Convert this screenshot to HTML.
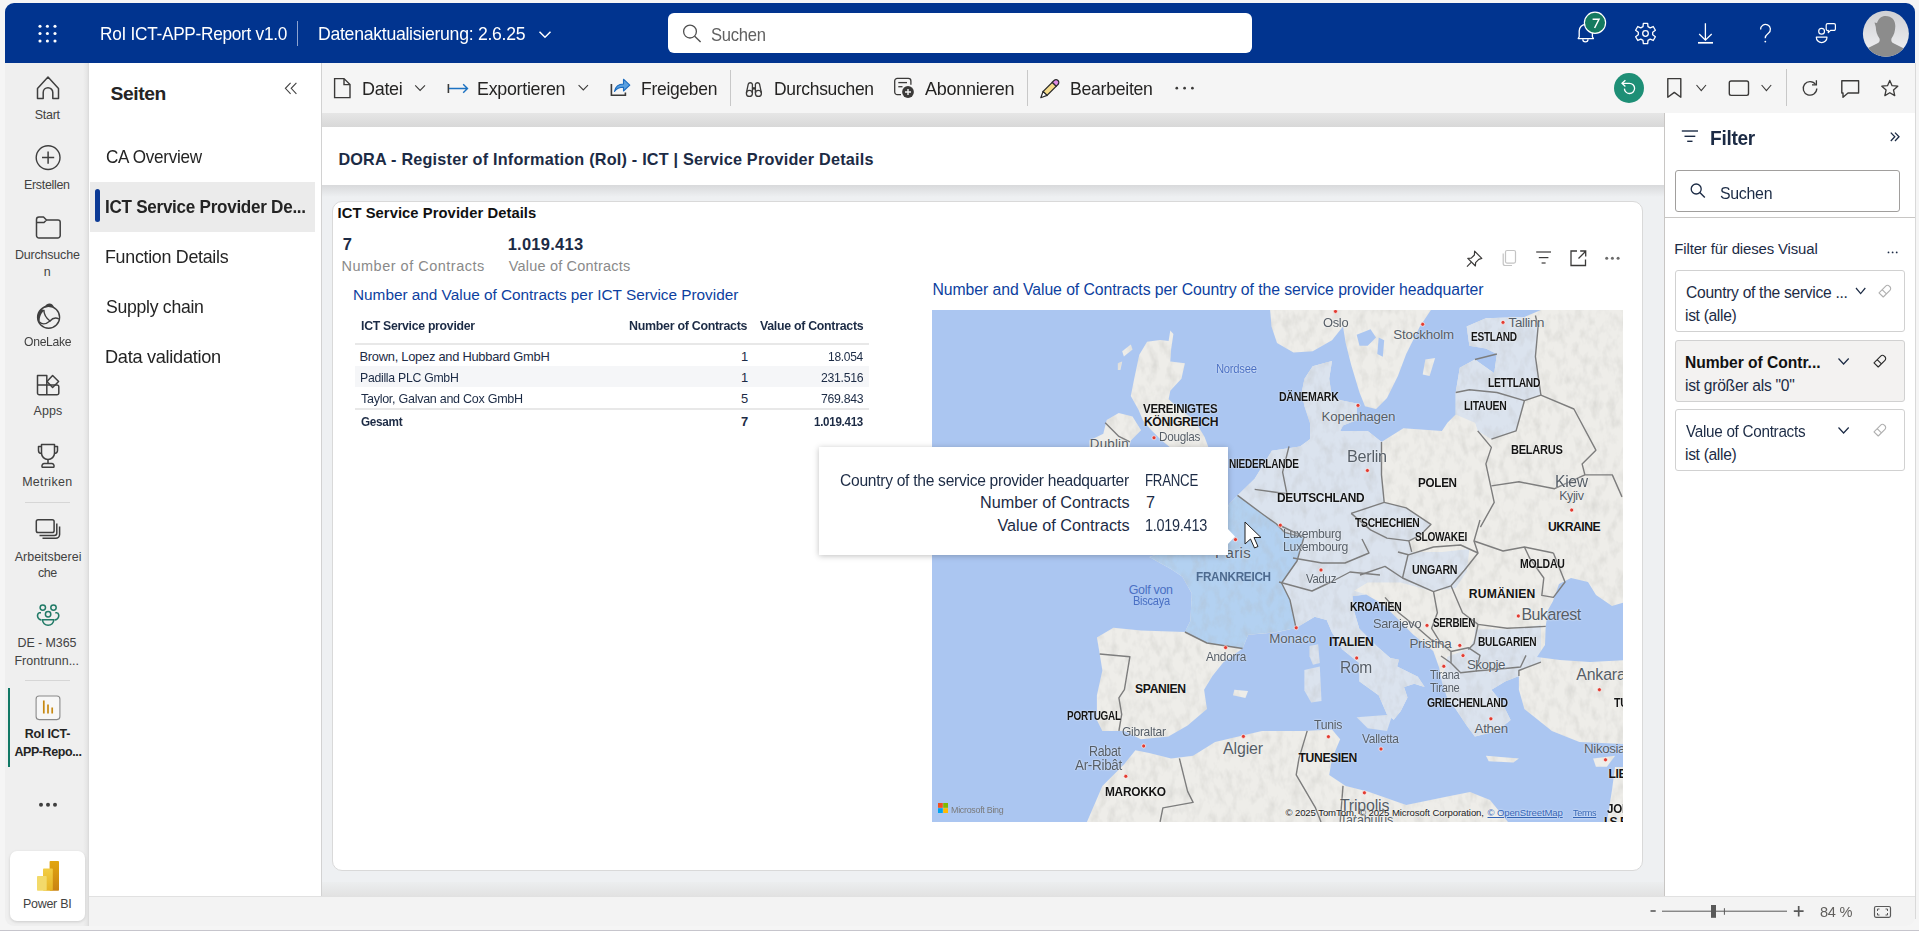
<!DOCTYPE html>
<html><head><meta charset="utf-8"><style>
*{margin:0;padding:0;box-sizing:border-box}
html,body{width:1919px;height:931px;overflow:hidden;background:#f5f5f5;font-family:"Liberation Sans",sans-serif;position:relative}
.a{position:absolute}
.t{position:absolute;white-space:nowrap;line-height:1}
svg{position:absolute;overflow:visible}
#topbar{left:5px;top:3px;width:1910px;height:60px;background:#01348f;border-radius:9px 9px 0 0}
#rail{left:5px;top:63px;width:84px;height:863px;background:linear-gradient(to right,#efefef 0,#efefef 78px,#e6e6e6 82px,#d9d9d9 84px);border-radius:0 0 0 9px}
#pages{left:89px;top:63px;width:232px;height:833px;background:#fff}
#vline{left:321px;top:63px;width:1px;height:833px;background:#d2d2d2}
#toolbar{left:322px;top:63px;width:1593px;height:50px;background:#f5f5f5}
#canvas{left:322px;top:113px;width:1342px;height:783px;background:#eef0f2}
#band1{left:322px;top:113px;width:1342px;height:14px;background:linear-gradient(#e6e6e6,#d8d8d8)}
#hdr{left:322px;top:127px;width:1342px;height:58px;background:#fff}
#band2{left:322px;top:185px;width:1342px;height:12px;background:linear-gradient(#d8d9db,#eef0f2)}
#band3{left:322px;top:882px;width:1342px;height:14px;background:linear-gradient(#eceeef,#e2e2e2)}
#card{left:332px;top:201px;width:1311px;height:670px;background:#fff;border:1px solid #d9d9d9;border-radius:10px}
#filter{left:1664px;top:113px;width:251px;height:783px;background:#fff;border-left:1px solid #c8c6c4}
#bottom{left:89px;top:896px;width:1826px;height:30px;background:#f3f3f3;border-top:1px solid #e1e1e1;border-radius:0 0 9px 0}
#botline{left:0;top:930px;width:1919px;height:1px;background:#c6c5cc}
#fsearch{left:1675px;top:170px;width:225px;height:42px;border:1px solid #a19f9d;border-radius:3px;background:#fff}
#fsep{left:1665px;top:217px;width:250px;height:1px;background:#c8c6c4}
.fcard{position:absolute;left:1675px;width:230px;border:1px solid #d1d1d1;border-radius:3px;background:#fff}
#sel{left:90px;top:182px;width:225px;height:50px;background:#ebebeb}
#selbar{left:95px;top:189px;width:5px;height:33px;background:#0c3a95;border-radius:3px}
#tsearch{left:668px;top:13px;width:584px;height:40px;background:#fff;border-radius:6px}
#tooltip{left:819px;top:447px;width:409px;height:108px;background:#fff;box-shadow:0 1px 6px rgba(0,0,0,.25)}
.sep{position:absolute;background:#d6d6d6}

</style></head><body>
<div class="a" id="topbar"></div>
<div class="a" id="tsearch"></div>
<div class="a" id="rail"></div>
<div class="a" id="pages"></div>
<div class="a" id="vline"></div>
<div class="a" id="toolbar"></div>
<div class="a" id="canvas"></div>
<div class="a" id="band1"></div>
<div class="a" id="hdr"></div>
<div class="a" id="band2"></div>
<div class="a" id="band3"></div>
<div class="a" id="card"></div>
<div class="a" id="filter"></div>
<div class="a" id="fsearch"></div>
<div class="a" id="fsep"></div>
<div class="fcard" style="top:270px;height:62px"></div>
<div class="fcard" style="top:340px;height:62px;background:#f3f2f1"></div>
<div class="fcard" style="top:409px;height:62px"></div>
<div class="a" id="bottom"></div>
<div class="a" id="botline"></div>
<div class="a" id="sel"></div>
<div class="a" id="selbar"></div>
<div class="sep" style="left:25px;top:502px;width:45px;height:1px"></div>
<div class="sep" style="left:25px;top:680px;width:45px;height:1px"></div>
<div class="a" style="left:8px;top:688px;width:2px;height:79px;background:#117865"></div>
<div class="a" style="left:10px;top:851px;width:75px;height:70px;background:#fff;border-radius:7px;box-shadow:0 1px 3px rgba(0,0,0,.15)"></div>
<div class="a" style="left:297px;top:21px;width:1px;height:25px;background:#8da2cf"></div>
<div class="a" style="left:730px;top:70px;width:1px;height:36px;background:#c8c8c8"></div>
<div class="a" style="left:1027px;top:70px;width:1px;height:36px;background:#c8c8c8"></div>
<div class="a" style="left:1786px;top:69px;width:1px;height:37px;background:#c8c8c8"></div>
<div class="a" style="left:355px;top:343px;width:514px;height:2px;background:#e8e8e8"></div>
<div class="a" style="left:355px;top:366px;width:514px;height:21px;background:#f5f6f8"></div>
<div class="a" style="left:355px;top:408px;width:514px;height:2px;background:#e8e8e8"></div>
<div class="a" style="left:1915px;top:63px;width:1px;height:856px;background:#d9d9d9"></div>

<div id="map" class="a" style="left:932px;top:310px;width:691px;height:512px;overflow:hidden;background:#abc6f1">
<svg width="691" height="512" viewBox="932 310 691 512" style="left:0;top:0"><defs><filter id="relief" x="0" y="0" width="1" height="1" filterUnits="objectBoundingBox"><feTurbulence type="fractalNoise" baseFrequency="0.12 0.07" numOctaves="3" seed="7" result="n"/><feColorMatrix in="n" type="matrix" values="0 0 0 0 0.45  0 0 0 0 0.45  0 0 0 0 0.43  0.7 0 0 0 -0.30" result="sh"/><feComposite in="sh" in2="SourceAlpha" operator="in" result="s2"/><feMerge><feMergeNode in="SourceGraphic"/><feMergeNode in="s2"/></feMerge></filter></defs>
<g filter="url(#relief)">
<path d="M1270.1,310.0 L1430.9,310.0 L1419.9,326.5 L1406.2,354.0 L1397.9,376.0 L1387.0,398.0 L1376.0,409.0 L1365.0,406.2 L1359.5,392.5 L1351.2,365.0 L1345.7,343.0 L1343.0,326.5 L1332.0,340.2 L1312.7,351.2 L1293.5,352.6 L1277.0,343.0 L1271.5,326.5 Z" fill="#eeede9" />
<path d="M1425.4,359.5 L1435.1,358.1 L1429.6,376.0 L1422.7,374.6 Z" fill="#eeede9" />
<path d="M1096.9,637.5 L1113.4,627.8 L1140.9,630.6 L1184.9,632.0 L1190.4,621.0 L1191.8,593.5 L1176.6,566.0 L1190.2,581.8 L1170.9,568.9 L1149.4,557.1 L1164.4,551.7 L1181.6,549.6 L1201.0,541.0 L1220.3,530.2 L1228.9,504.4 L1237.5,495.4 L1254.7,478.7 L1271.9,450.7 L1300.0,446.4 L1310.0,439.2 L1310.0,422.7 L1304.5,406.2 L1301.7,392.5 L1304.5,378.7 L1312.7,366.3 L1332.0,360.9 L1329.2,378.7 L1332.0,398.0 L1343.0,400.7 L1356.7,403.5 L1356.7,420.0 L1343.0,425.4 L1340.2,430.9 L1367.7,430.9 L1381.5,441.9 L1403.4,428.2 L1441.9,430.9 L1447.4,422.7 L1455.7,414.5 L1455.7,392.5 L1459.8,367.7 L1474.9,359.5 L1494.2,373.2 L1496.9,354.0 L1485.9,348.5 L1469.4,345.7 L1466.7,326.5 L1485.9,318.2 L1524.4,316.9 L1540.9,310.0 L1634.3,308.6 L1634.3,565.9 L1634.3,744.7 L1579.4,741.9 L1551.9,730.9 L1524.4,708.9 L1518.9,689.7 L1518.9,676.0 L1505.1,681.4 L1491.4,689.7 L1502.4,703.4 L1510.6,719.9 L1496.9,730.9 L1474.9,736.4 L1466.7,725.4 L1455.7,708.9 L1447.4,697.9 L1441.9,681.4 L1439.2,667.7 L1433.2,651.1 L1412.6,633.9 L1398.9,620.1 L1383.4,604.7 L1366.2,594.4 L1352.5,596.1 L1354.2,611.5 L1359.3,628.7 L1376.5,645.9 L1390.3,657.9 L1398.9,659.7 L1397.1,666.5 L1417.8,676.8 L1424.6,687.1 L1414.3,683.7 L1404.0,687.1 L1407.5,697.5 L1400.6,711.2 L1393.7,719.8 L1387.0,714.4 L1378.7,695.2 L1359.5,681.4 L1359.3,663.1 L1342.2,649.3 L1331.9,632.2 L1326.7,620.1 L1314.7,616.7 L1295.8,627.9 L1276.9,632.2 L1248.1,634.7 L1242.6,648.5 L1223.4,662.2 L1212.4,676.0 L1204.1,689.7 L1206.9,708.9 L1187.6,725.4 L1168.4,736.4 L1140.9,739.2 L1124.4,730.9 L1102.4,730.9 L1096.9,719.9 L1096.9,695.2 L1102.4,670.5 L1099.7,654.0 Z" fill="#eeede9" />
<path d="M1085.9,824.4 L1102.4,785.9 L1124.4,763.9 L1135.4,750.2 L1149.2,752.9 L1171.1,758.4 L1193.1,755.7 L1215.1,741.9 L1261.9,730.9 L1289.3,730.9 L1304.5,730.9 L1332.0,729.6 L1340.2,739.2 L1332.0,758.4 L1329.2,774.9 L1345.7,785.9 L1367.7,791.4 L1406.2,805.1 L1445.0,797.0 L1470.0,792.0 L1490.0,800.0 L1508.0,822.0 L1508.0,940.0 Z" fill="#eeede9" />
<path d="M1615.0,767.0 L1635.0,767.0 L1635.0,840.0 L1604.0,840.0 L1608.0,815.0 L1612.0,790.0 Z" fill="#eeede9" />
<path d="M1147.1,341.8 L1160.0,340.1 L1168.6,340.9 L1170.3,330.6 L1173.4,334.1 L1171.1,349.5 L1170.3,361.5 L1184.9,363.3 L1181.4,378.7 L1170.3,390.8 L1168.6,399.3 L1180.6,409.7 L1194.3,420.0 L1204.6,437.1 L1209.8,450.9 L1214.9,473.2 L1221.8,490.4 L1213.2,507.6 L1187.5,509.3 L1161.7,512.7 L1170.3,499.0 L1156.5,481.8 L1166.8,464.6 L1170.3,447.5 L1161.7,440.6 L1151.4,430.3 L1142.8,420.0 L1138.5,409.7 L1130.8,395.9 L1134.2,378.7 L1139.3,354.7 Z" fill="#eeede9" />
<path d="M1106.7,420.0 L1118.7,413.1 L1132.5,416.5 L1141.1,430.3 L1130.8,440.6 L1127.3,456.0 L1110.1,481.8 L1084.4,478.4 L1089.5,456.0 L1089.5,440.6 L1103.3,433.7 Z" fill="#eeede9" />
<path d="M1122.2,351.2 L1130.8,344.4 L1132.5,349.5 L1123.9,356.4 Z" fill="#eeede9" />
<path d="M1117.9,363.3 L1122.2,361.5 L1120.4,370.1 L1117.9,370.1 Z" fill="#eeede9" />
<path d="M1309.5,645.9 L1318.1,644.2 L1319.8,663.1 L1313.0,664.8 L1309.5,656.2 Z" fill="#dbe3ee" />
<path d="M1304.4,670.0 L1319.8,666.5 L1321.5,700.9 L1311.2,702.6 L1304.4,690.6 Z" fill="#dbe3ee" />
<path d="M1356.7,717.2 L1392.4,714.4 L1387.0,730.9 L1367.7,728.2 Z" fill="#dbe3ee" />
<path d="M1485.9,755.7 L1518.9,758.4 L1513.4,762.5 L1488.7,761.2 Z" fill="#eeede9" />
<path d="M1593.1,758.4 L1615.1,755.7 L1606.9,766.7 L1595.9,766.7 Z" fill="#eeede9" />
<path d="M1234.4,689.7 L1248.1,691.1 L1245.4,697.9 L1233.0,695.2 Z" fill="#eeede9" />
<path d="M1176.6,566.0 L1191.8,593.5 L1190.4,621.0 L1184.9,632.0 L1206.9,643.0 L1242.6,648.5 L1248.1,634.7 L1277.0,632.0 L1277.0,632.0 L1296.0,627.9 L1290.0,600.0 L1281.6,583.0 L1297.0,561.0 L1304.0,537.0 L1280.0,525.5 L1300.0,536.7 L1284.7,532.4 L1276.2,523.8 L1261.1,513.0 L1237.5,495.4 L1228.9,504.4 L1220.3,530.2 L1201.0,541.0 L1181.6,549.6 L1164.4,551.7 L1149.4,557.1 L1170.9,568.9 L1190.2,581.8 Z" fill="#b3d1f1" />
<path d="M1237.5,495.4 L1254.7,478.7 L1271.9,450.7 L1300.0,446.4 L1310.0,439.2 L1310.0,422.7 L1304.5,406.2 L1301.7,392.5 L1304.5,378.7 L1312.7,366.3 L1332.0,360.9 L1329.2,378.7 L1332.0,398.0 L1343.0,400.7 L1356.7,403.5 L1356.7,420.0 L1343.0,425.4 L1340.2,430.9 L1367.7,430.9 L1381.5,441.9 L1381.5,474.9 L1384.2,502.4 L1406.2,507.9 L1430.9,524.4 L1419.9,535.4 L1408.9,540.9 L1411.7,551.9 L1441.9,551.9 L1469.4,549.1 L1466.7,571.5 L1455.7,588.0 L1430.9,590.7 L1400.7,582.5 L1367.7,582.5 L1354.0,590.7 L1366.2,594.4 L1352.5,596.1 L1354.2,611.5 L1359.3,628.7 L1376.5,645.9 L1390.3,657.9 L1398.9,659.7 L1397.1,666.5 L1417.8,676.8 L1424.6,687.1 L1414.3,683.7 L1404.0,687.1 L1407.5,697.5 L1400.6,711.2 L1393.7,719.8 L1387.0,714.4 L1378.7,695.2 L1359.5,681.4 L1359.3,663.1 L1342.2,649.3 L1331.9,632.2 L1326.7,620.1 L1314.7,616.7 L1295.8,627.9 L1290.0,600.0 L1281.6,583.0 L1297.0,561.0 L1304.0,537.0 L1280.0,525.5 L1300.0,536.7 L1284.7,532.4 L1276.2,523.8 L1261.1,513.0 Z" fill="#dbe3ee" />
<path d="M1469.4,345.7 L1466.7,326.5 L1485.9,318.2 L1524.4,316.9 L1538.1,326.5 L1535.4,356.7 L1540.9,395.2 L1524.4,400.7 L1516.1,430.9 L1491.4,439.2 L1477.7,430.9 L1474.9,422.7 L1455.7,414.5 L1455.7,392.5 L1459.8,367.7 L1474.9,359.5 L1494.2,373.2 L1496.9,354.0 L1485.9,348.5 Z" fill="#dbe3ee" />
<path d="M1474.9,629.2 L1510.6,629.2 L1540.9,625.1 L1540.9,662.2 L1518.9,670.5 L1518.9,676.0 L1505.1,681.4 L1491.4,689.7 L1502.4,703.4 L1510.6,719.9 L1496.9,730.9 L1474.9,736.4 L1466.7,725.4 L1455.7,708.9 L1447.4,697.9 L1441.9,681.4 L1447.4,656.7 L1469.4,648.5 L1474.9,637.5 Z" fill="#dbe3ee" />
<path d="M1444.7,428.2 L1474.9,422.7 L1477.7,430.9 L1441.9,432.3 Z" fill="#eeede9" />
</g>
<path d="M1356.7,334.7 L1370.5,329.2 L1376.0,337.5 L1367.7,345.7 L1359.5,345.7 Z" fill="#abc6f1" />
<path d="M1378.7,337.5 L1384.2,340.2 L1382.8,356.7 L1377.3,354.0 Z" fill="#abc6f1" />
<path d="M1545.7,626.4 L1548.0,610.0 L1553.0,601.0 L1559.0,584.0 L1571.0,578.0 L1588.0,582.0 L1596.0,595.0 L1612.0,606.0 L1622.0,603.0 L1630.0,600.0 L1630.0,660.0 L1590.0,662.0 L1560.0,660.0 L1537.0,657.0 L1545.0,645.0 Z" fill="#abc6f1" />
<path d="M1381.5,441.9 L1381.5,474.9 L1384.2,502.4 L1406.2,507.9 L1430.9,524.4 L1419.9,535.4 L1408.9,540.9 L1411.7,551.9" fill="none" stroke="#7d7d7d" stroke-width="1.4" stroke-linejoin="round" />
<path d="M1398.0,552.0 L1408.4,554.8 L1433.5,547.0 L1460.6,545.0 L1478.0,553.0 L1474.0,541.0 L1480.0,520.0" fill="none" stroke="#7d7d7d" stroke-width="1.4" stroke-linejoin="round" />
<path d="M1478.0,553.0 L1464.4,570.3 L1451.0,585.8 L1433.5,591.6 L1402.5,578.0 L1385.0,566.4 L1360.0,575.0" fill="none" stroke="#7d7d7d" stroke-width="1.4" stroke-linejoin="round" />
<path d="M1408.0,555.0 L1402.5,578.0" fill="none" stroke="#7d7d7d" stroke-width="1.4" stroke-linejoin="round" />
<path d="M1474.0,541.0 L1503.0,551.0 L1524.4,547.0 L1553.4,553.0" fill="none" stroke="#7d7d7d" stroke-width="1.4" stroke-linejoin="round" />
<path d="M1524.4,547.0 L1530.0,558.7 L1543.8,578.0 L1541.8,595.4 L1553.4,597.4 L1565.0,582.0 L1553.4,553.0" fill="none" stroke="#7d7d7d" stroke-width="1.4" stroke-linejoin="round" />
<path d="M1451.0,585.8 L1462.5,612.8 L1478.0,624.4 L1507.0,628.3 L1545.7,626.4" fill="none" stroke="#7d7d7d" stroke-width="1.4" stroke-linejoin="round" />
<path d="M1478.0,624.4 L1474.0,643.8 L1468.3,649.6" fill="none" stroke="#7d7d7d" stroke-width="1.4" stroke-linejoin="round" />
<path d="M1433.5,591.6 L1437.4,612.8 L1431.6,628.3 L1441.2,643.8 L1451.0,651.5" fill="none" stroke="#7d7d7d" stroke-width="1.4" stroke-linejoin="round" />
<path d="M1385.0,597.4 L1398.7,612.8 L1418.0,628.3 L1431.6,640.0 L1441.2,643.8" fill="none" stroke="#7d7d7d" stroke-width="1.4" stroke-linejoin="round" />
<path d="M1451.0,651.5 L1468.3,647.7 L1480.0,655.4 L1476.0,671.0 L1460.6,672.8 L1451.0,663.0 L1451.0,651.5" fill="none" stroke="#7d7d7d" stroke-width="1.4" stroke-linejoin="round" />
<path d="M1476.0,671.0 L1500.0,669.0 L1520.5,667.0 L1526.0,655.4" fill="none" stroke="#7d7d7d" stroke-width="1.4" stroke-linejoin="round" />
<path d="M1441.0,656.0 L1451.0,663.0" fill="none" stroke="#7d7d7d" stroke-width="1.4" stroke-linejoin="round" />
<path d="M1099.7,654.0 L1129.9,656.7 L1124.4,689.7 L1118.9,697.9 L1121.7,714.4 L1118.9,730.9" fill="none" stroke="#7d7d7d" stroke-width="1.4" stroke-linejoin="round" />
<path d="M1184.9,632.0 L1206.9,643.0 L1242.6,648.5" fill="none" stroke="#7d7d7d" stroke-width="1.4" stroke-linejoin="round" />
<path d="M1179.4,758.4 L1187.6,791.4 L1193.1,802.4 L1162.9,807.9 L1160.1,821.9" fill="none" stroke="#7d7d7d" stroke-width="1.4" stroke-linejoin="round" />
<path d="M1307.2,730.9 L1299.0,758.4 L1296.2,774.9 L1315.5,807.9 L1321.0,821.9" fill="none" stroke="#7d7d7d" stroke-width="1.4" stroke-linejoin="round" />
<path d="M1343.0,785.9 L1340.2,821.9" fill="none" stroke="#7d7d7d" stroke-width="1.4" stroke-linejoin="round" />
<path d="M1477.7,430.9 L1491.4,447.4 L1485.9,463.9 L1494.2,502.4 L1480.4,527.2" fill="none" stroke="#7d7d7d" stroke-width="1.4" stroke-linejoin="round" />
<path d="M1491.4,439.2 L1516.1,430.9 L1524.4,400.7 L1540.9,395.2" fill="none" stroke="#7d7d7d" stroke-width="1.4" stroke-linejoin="round" />
<path d="M1540.9,395.2 L1573.9,409.0 L1595.9,450.2 L1582.1,463.9 L1584.9,474.9" fill="none" stroke="#7d7d7d" stroke-width="1.4" stroke-linejoin="round" />
<path d="M1491.4,485.9 L1518.9,481.8 L1554.6,488.7 L1584.9,474.9 L1612.3,474.9 L1622.0,496.9" fill="none" stroke="#7d7d7d" stroke-width="1.4" stroke-linejoin="round" />
<path d="M1535.4,315.5 L1538.1,326.5 L1535.4,356.7 L1540.9,395.2" fill="none" stroke="#7d7d7d" stroke-width="1.4" stroke-linejoin="round" />
<path d="M1455.7,392.5 L1469.4,389.7 L1496.9,392.5 L1524.4,400.7" fill="none" stroke="#7d7d7d" stroke-width="1.4" stroke-linejoin="round" />
<path d="M1474.9,359.5 L1496.9,354.0" fill="none" stroke="#7d7d7d" stroke-width="1.4" stroke-linejoin="round" />
<path d="M1351.2,513.4 L1384.2,502.4" fill="none" stroke="#7d7d7d" stroke-width="1.4" stroke-linejoin="round" />
<path d="M1351.2,513.4 L1370.5,529.9 L1387.0,538.1 L1408.9,540.9" fill="none" stroke="#7d7d7d" stroke-width="1.4" stroke-linejoin="round" />
<path d="M1540.9,662.2 L1518.9,670.5 L1518.9,676.0" fill="none" stroke="#7d7d7d" stroke-width="1.4" stroke-linejoin="round" />
<path d="M1279.0,582.0 L1312.0,591.0 L1331.0,582.0 L1350.0,572.0 L1380.0,575.0" fill="none" stroke="#7d7d7d" stroke-width="1.4" stroke-linejoin="round" />
<path d="M1293.0,558.0 L1322.0,563.0 L1345.0,563.0 L1369.0,553.0 L1362.0,539.0" fill="none" stroke="#7d7d7d" stroke-width="1.4" stroke-linejoin="round" />
<path d="M1296.0,627.9 L1290.0,600.0 L1281.6,583.0 L1297.0,561.0 L1304.0,537.0 L1280.0,525.5" fill="none" stroke="#7d7d7d" stroke-width="1.4" stroke-linejoin="round" />
<path d="M1300.0,536.7 L1284.7,532.4 L1276.2,523.8 L1261.1,513.0 L1237.5,495.4" fill="none" stroke="#7d7d7d" stroke-width="1.4" stroke-linejoin="round" />
<path d="M1254.7,489.4 L1286.9,493.7 L1282.6,472.2 L1289.0,446.4" fill="none" stroke="#7d7d7d" stroke-width="1.4" stroke-linejoin="round" />
<path d="M1105.2,422.7 L1118.9,436.4 L1129.9,441.9" fill="none" stroke="#7d7d7d" stroke-width="1.4" stroke-linejoin="round" />
<circle cx="1335.5" cy="311.4" r="2" fill="#e23b30" stroke="#fff" stroke-width="0.6"/>
<circle cx="1422.7" cy="324.3" r="2" fill="#e23b30" stroke="#fff" stroke-width="0.6"/>
<circle cx="1503" cy="322.4" r="2" fill="#e23b30" stroke="#fff" stroke-width="0.6"/>
<circle cx="1358" cy="405.4" r="2" fill="#e23b30" stroke="#fff" stroke-width="0.6"/>
<circle cx="1367.4" cy="470.5" r="2" fill="#e23b30" stroke="#fff" stroke-width="0.6"/>
<circle cx="1571.7" cy="510.1" r="2" fill="#e23b30" stroke="#fff" stroke-width="0.6"/>
<circle cx="1280.3" cy="525.2" r="2" fill="#e23b30" stroke="#fff" stroke-width="0.6"/>
<circle cx="1154" cy="437.8" r="2" fill="#e23b30" stroke="#fff" stroke-width="0.6"/>
<circle cx="1225.6" cy="647.6" r="2" fill="#e23b30" stroke="#fff" stroke-width="0.6"/>
<circle cx="1143.7" cy="746" r="2" fill="#e23b30" stroke="#fff" stroke-width="0.6"/>
<circle cx="1125.8" cy="776.3" r="2" fill="#e23b30" stroke="#fff" stroke-width="0.6"/>
<circle cx="1243.4" cy="736.4" r="2" fill="#e23b30" stroke="#fff" stroke-width="0.6"/>
<circle cx="1321" cy="570" r="2" fill="#e23b30" stroke="#fff" stroke-width="0.6"/>
<circle cx="1518.3" cy="616" r="2" fill="#e23b30" stroke="#fff" stroke-width="0.6"/>
<circle cx="1427" cy="625.4" r="2" fill="#e23b30" stroke="#fff" stroke-width="0.6"/>
<circle cx="1296.2" cy="627.8" r="2" fill="#e23b30" stroke="#fff" stroke-width="0.6"/>
<circle cx="1459.8" cy="645.4" r="2" fill="#e23b30" stroke="#fff" stroke-width="0.6"/>
<circle cx="1463" cy="655.6" r="2" fill="#e23b30" stroke="#fff" stroke-width="0.6"/>
<circle cx="1356.7" cy="658" r="2" fill="#e23b30" stroke="#fff" stroke-width="0.6"/>
<circle cx="1599.4" cy="689.7" r="2" fill="#e23b30" stroke="#fff" stroke-width="0.6"/>
<circle cx="1443.8" cy="666.3" r="2" fill="#e23b30" stroke="#fff" stroke-width="0.6"/>
<circle cx="1490.9" cy="718.8" r="2" fill="#e23b30" stroke="#fff" stroke-width="0.6"/>
<circle cx="1328.4" cy="736.7" r="2" fill="#e23b30" stroke="#fff" stroke-width="0.6"/>
<circle cx="1381" cy="749" r="2" fill="#e23b30" stroke="#fff" stroke-width="0.6"/>
<circle cx="1605.5" cy="759.8" r="2" fill="#e23b30" stroke="#fff" stroke-width="0.6"/>
<circle cx="1364.4" cy="792.8" r="2" fill="#e23b30" stroke="#fff" stroke-width="0.6"/>
<circle cx="1235.5" cy="539.6" r="2" fill="#e23b30" stroke="#fff" stroke-width="0.6"/>
<rect x="938" y="803" width="4.8" height="4.8" fill="#f25022"/><rect x="943.2" y="803" width="4.8" height="4.8" fill="#7fba00"/><rect x="938" y="808.2" width="4.8" height="4.8" fill="#00a4ef"/><rect x="943.2" y="808.2" width="4.8" height="4.8" fill="#ffb900"/></svg>
<div class="a" style="left:-932px;top:-310px;width:1919px;height:931px"><div class="t" style="left:1215.00px;top:544.69px;font-size:15.07px;color:#555d66;letter-spacing:0.354px;;text-shadow:0 0 2px rgba(255,255,255,.9)">Paris</div>
<div class="t" style="left:1322.60px;top:316.17px;font-size:13.33px;color:#555d66;letter-spacing:-0.300px;transform:scaleX(0.9658);transform-origin:0 0;;text-shadow:0 0 2px rgba(255,255,255,.9)">Oslo</div>
<div class="t" style="left:1393.30px;top:327.97px;font-size:13.33px;color:#555d66;letter-spacing:-0.177px;;text-shadow:0 0 2px rgba(255,255,255,.9)">Stockholm</div>
<div class="t" style="left:1508.60px;top:315.97px;font-size:13.33px;color:#555d66;letter-spacing:-0.329px;;text-shadow:0 0 2px rgba(255,255,255,.9)">Tallinn</div>
<div class="t" style="left:1471.00px;top:330.66px;font-size:12.17px;color:#141414;letter-spacing:-0.300px;font-weight:bold;transform:scaleX(0.8294);transform-origin:0 0;;text-shadow:0 0 2px rgba(255,255,255,.9)">ESTLAND</div>
<div class="t" style="left:1488.20px;top:376.86px;font-size:12.17px;color:#141414;letter-spacing:-0.300px;font-weight:bold;transform:scaleX(0.8447);transform-origin:0 0;;text-shadow:0 0 2px rgba(255,255,255,.9)">LETTLAND</div>
<div class="t" style="left:1464.20px;top:399.86px;font-size:12.17px;color:#141414;letter-spacing:-0.300px;font-weight:bold;transform:scaleX(0.8558);transform-origin:0 0;;text-shadow:0 0 2px rgba(255,255,255,.9)">LITAUEN</div>
<div class="t" style="left:1278.60px;top:391.46px;font-size:12.17px;color:#141414;letter-spacing:-0.300px;font-weight:bold;transform:scaleX(0.8692);transform-origin:0 0;;text-shadow:0 0 2px rgba(255,255,255,.9)">DÄNEMARK</div>
<div class="t" style="left:1321.60px;top:410.17px;font-size:13.33px;color:#555d66;letter-spacing:-0.199px;;text-shadow:0 0 2px rgba(255,255,255,.9)">Kopenhagen</div>
<div class="t" style="left:1346.85px;top:448.46px;font-size:17.1px;color:#555d66;letter-spacing:-0.300px;transform:scaleX(0.9485);transform-origin:0 0;;text-shadow:0 0 2px rgba(255,255,255,.9)">Berlin</div>
<div class="t" style="left:1417.90px;top:477.36px;font-size:12.17px;color:#141414;letter-spacing:-0.300px;font-weight:bold;transform:scaleX(0.9600);transform-origin:0 0;;text-shadow:0 0 2px rgba(255,255,255,.9)">POLEN</div>
<div class="t" style="left:1510.80px;top:444.26px;font-size:12.17px;color:#141414;letter-spacing:-0.300px;font-weight:bold;transform:scaleX(0.9129);transform-origin:0 0;;text-shadow:0 0 2px rgba(255,255,255,.9)">BELARUS</div>
<div class="t" style="left:1555.22px;top:474.45px;font-size:15.94px;color:#555d66;letter-spacing:-0.300px;transform:scaleX(0.9839);transform-origin:0 0;;text-shadow:0 0 2px rgba(255,255,255,.9)">Kiew</div>
<div class="t" style="left:1559.20px;top:490.41px;font-size:12.46px;color:#555d66;letter-spacing:-0.392px;;text-shadow:0 0 2px rgba(255,255,255,.9)">Kyjiv</div>
<div class="t" style="left:1548.00px;top:521.16px;font-size:12.17px;color:#141414;letter-spacing:-0.445px;font-weight:bold;;text-shadow:0 0 2px rgba(255,255,255,.9)">UKRAINE</div>
<div class="t" style="left:1277.20px;top:491.96px;font-size:12.17px;color:#141414;letter-spacing:-0.300px;font-weight:bold;transform:scaleX(0.9784);transform-origin:0 0;;text-shadow:0 0 2px rgba(255,255,255,.9)">DEUTSCHLAND</div>
<div class="t" style="left:1354.70px;top:517.06px;font-size:12.17px;color:#141414;letter-spacing:-0.300px;font-weight:bold;transform:scaleX(0.8485);transform-origin:0 0;;text-shadow:0 0 2px rgba(255,255,255,.9)">TSCHECHIEN</div>
<div class="t" style="left:1414.60px;top:531.36px;font-size:12.17px;color:#141414;letter-spacing:-0.300px;font-weight:bold;transform:scaleX(0.8323);transform-origin:0 0;;text-shadow:0 0 2px rgba(255,255,255,.9)">SLOWAKEI</div>
<div class="t" style="left:1283.05px;top:528.36px;font-size:12.75px;color:#555d66;letter-spacing:-0.300px;transform:scaleX(0.9520);transform-origin:0 0;;text-shadow:0 0 2px rgba(255,255,255,.9)">Luxemburg</div>
<div class="t" style="left:1283.04px;top:540.96px;font-size:12.75px;color:#555d66;letter-spacing:-0.300px;transform:scaleX(0.9585);transform-origin:0 0;;text-shadow:0 0 2px rgba(255,255,255,.9)">Luxembourg</div>
<div class="t" style="left:1520.40px;top:558.46px;font-size:12.17px;color:#141414;letter-spacing:-0.300px;font-weight:bold;transform:scaleX(0.8643);transform-origin:0 0;;text-shadow:0 0 2px rgba(255,255,255,.9)">MOLDAU</div>
<div class="t" style="left:1215.80px;top:363.21px;font-size:12.46px;color:#4a70c4;letter-spacing:-0.300px;transform:scaleX(0.9043);transform-origin:0 0;;text-shadow:0 0 2px rgba(255,255,255,.9)">Nordsee</div>
<div class="t" style="left:1143.20px;top:402.96px;font-size:12.17px;color:#141414;letter-spacing:-0.300px;font-weight:bold;transform:scaleX(0.9475);transform-origin:0 0;;text-shadow:0 0 2px rgba(255,255,255,.9)">VEREINIGTES</div>
<div class="t" style="left:1143.90px;top:416.46px;font-size:12.17px;color:#141414;letter-spacing:-0.343px;font-weight:bold;;text-shadow:0 0 2px rgba(255,255,255,.9)">KÖNIGREICH</div>
<div class="t" style="left:1158.92px;top:429.67px;font-size:13.33px;color:#555d66;letter-spacing:-0.300px;transform:scaleX(0.8786);transform-origin:0 0;;text-shadow:0 0 2px rgba(255,255,255,.9)">Douglas</div>
<div class="t" style="left:1089.80px;top:436.87px;font-size:13.33px;color:#555d66;letter-spacing:0.226px;;text-shadow:0 0 2px rgba(255,255,255,.9)">Dublin</div>
<div class="t" style="left:1228.90px;top:457.66px;font-size:12.17px;color:#141414;letter-spacing:-0.300px;font-weight:bold;transform:scaleX(0.8242);transform-origin:0 0;;text-shadow:0 0 2px rgba(255,255,255,.9)">NIEDERLANDE</div>
<div class="t" style="left:1196.10px;top:571.46px;font-size:12.17px;color:#4d6a8f;letter-spacing:-0.300px;font-weight:bold;transform:scaleX(0.9664);transform-origin:0 0">FRANKREICH</div>
<div class="t" style="left:1128.70px;top:583.71px;font-size:12.46px;color:#4a70c4;letter-spacing:-0.293px">Golf von</div>
<div class="t" style="left:1133.31px;top:594.91px;font-size:12.46px;color:#4a70c4;letter-spacing:-0.300px;transform:scaleX(0.8856);transform-origin:0 0">Biscaya</div>
<div class="t" style="left:1205.70px;top:650.27px;font-size:13.33px;color:#555d66;letter-spacing:-0.300px;transform:scaleX(0.8830);transform-origin:0 0;;text-shadow:0 0 2px rgba(255,255,255,.9)">Andorra</div>
<div class="t" style="left:1135.10px;top:682.86px;font-size:12.17px;color:#141414;letter-spacing:-0.376px;font-weight:bold;;text-shadow:0 0 2px rgba(255,255,255,.9)">SPANIEN</div>
<div class="t" style="left:1066.90px;top:709.86px;font-size:12.17px;color:#141414;letter-spacing:-0.300px;font-weight:bold;transform:scaleX(0.8188);transform-origin:0 0;;text-shadow:0 0 2px rgba(255,255,255,.9)">PORTUGAL</div>
<div class="t" style="left:1122.40px;top:725.47px;font-size:13.33px;color:#555d66;letter-spacing:-0.300px;transform:scaleX(0.9012);transform-origin:0 0;;text-shadow:0 0 2px rgba(255,255,255,.9)">Gibraltar</div>
<div class="t" style="left:1089.31px;top:744.58px;font-size:13.91px;color:#555d66;letter-spacing:-0.300px;transform:scaleX(0.8931);transform-origin:0 0;;text-shadow:0 0 2px rgba(255,255,255,.9)">Rabat</div>
<div class="t" style="left:1074.60px;top:758.98px;font-size:13.91px;color:#555d66;letter-spacing:-0.300px;transform:scaleX(0.9666);transform-origin:0 0;;text-shadow:0 0 2px rgba(255,255,255,.9)">Ar-Ribât</div>
<div class="t" style="left:1104.80px;top:785.96px;font-size:12.17px;color:#141414;letter-spacing:-0.300px;font-weight:bold;transform:scaleX(0.9790);transform-origin:0 0;;text-shadow:0 0 2px rgba(255,255,255,.9)">MAROKKO</div>
<div class="t" style="left:1223.00px;top:741.25px;font-size:15.94px;color:#555d66;letter-spacing:-0.128px;;text-shadow:0 0 2px rgba(255,255,255,.9)">Algier</div>
<div class="t" style="left:1411.90px;top:564.46px;font-size:12.17px;color:#141414;letter-spacing:-0.300px;font-weight:bold;transform:scaleX(0.8792);transform-origin:0 0;;text-shadow:0 0 2px rgba(255,255,255,.9)">UNGARN</div>
<div class="t" style="left:1305.50px;top:571.67px;font-size:13.33px;color:#555d66;letter-spacing:-0.300px;transform:scaleX(0.8529);transform-origin:0 0;;text-shadow:0 0 2px rgba(255,255,255,.9)">Vaduz</div>
<div class="t" style="left:1468.80px;top:588.06px;font-size:12.17px;color:#141414;letter-spacing:0.153px;font-weight:bold;;text-shadow:0 0 2px rgba(255,255,255,.9)">RUMÄNIEN</div>
<div class="t" style="left:1521.40px;top:606.85px;font-size:15.94px;color:#555d66;letter-spacing:-0.438px;;text-shadow:0 0 2px rgba(255,255,255,.9)">Bukarest</div>
<div class="t" style="left:1350.00px;top:600.96px;font-size:12.17px;color:#141414;letter-spacing:-0.300px;font-weight:bold;transform:scaleX(0.8543);transform-origin:0 0;;text-shadow:0 0 2px rgba(255,255,255,.9)">KROATIEN</div>
<div class="t" style="left:1372.90px;top:616.67px;font-size:13.33px;color:#555d66;letter-spacing:-0.300px;transform:scaleX(0.9623);transform-origin:0 0;;text-shadow:0 0 2px rgba(255,255,255,.9)">Sarajevo</div>
<div class="t" style="left:1433.10px;top:617.46px;font-size:12.17px;color:#141414;letter-spacing:-0.300px;font-weight:bold;transform:scaleX(0.8084);transform-origin:0 0;;text-shadow:0 0 2px rgba(255,255,255,.9)">SERBIEN</div>
<div class="t" style="left:1269.20px;top:631.87px;font-size:13.33px;color:#555d66;letter-spacing:-0.081px;;text-shadow:0 0 2px rgba(255,255,255,.9)">Monaco</div>
<div class="t" style="left:1328.90px;top:636.46px;font-size:12.17px;color:#141414;letter-spacing:-0.248px;font-weight:bold;;text-shadow:0 0 2px rgba(255,255,255,.9)">ITALIEN</div>
<div class="t" style="left:1409.50px;top:637.47px;font-size:13.33px;color:#555d66;letter-spacing:-0.333px;;text-shadow:0 0 2px rgba(255,255,255,.9)">Pristina</div>
<div class="t" style="left:1477.90px;top:636.16px;font-size:12.17px;color:#141414;letter-spacing:-0.300px;font-weight:bold;transform:scaleX(0.8381);transform-origin:0 0;;text-shadow:0 0 2px rgba(255,255,255,.9)">BULGARIEN</div>
<div class="t" style="left:1466.90px;top:657.97px;font-size:13.33px;color:#555d66;letter-spacing:-0.448px;;text-shadow:0 0 2px rgba(255,255,255,.9)">Skopje</div>
<div class="t" style="left:1340.22px;top:660.25px;font-size:15.94px;color:#555d66;letter-spacing:-0.300px;transform:scaleX(0.9757);transform-origin:0 0;;text-shadow:0 0 2px rgba(255,255,255,.9)">Rom</div>
<div class="t" style="left:1576.20px;top:667.45px;font-size:15.94px;color:#555d66;letter-spacing:-0.167px;;text-shadow:0 0 2px rgba(255,255,255,.9)">Ankara</div>
<div class="t" style="left:1429.80px;top:669.21px;font-size:12.46px;color:#555d66;letter-spacing:-0.300px;transform:scaleX(0.8920);transform-origin:0 0;;text-shadow:0 0 2px rgba(255,255,255,.9)">Tirana</div>
<div class="t" style="left:1429.80px;top:682.11px;font-size:12.46px;color:#555d66;letter-spacing:-0.300px;transform:scaleX(0.8920);transform-origin:0 0;;text-shadow:0 0 2px rgba(255,255,255,.9)">Tirane</div>
<div class="t" style="left:1426.50px;top:697.46px;font-size:12.17px;color:#141414;letter-spacing:-0.300px;font-weight:bold;transform:scaleX(0.8561);transform-origin:0 0;;text-shadow:0 0 2px rgba(255,255,255,.9)">GRIECHENLAND</div>
<div class="t" style="left:1613.90px;top:697.16px;font-size:12.17px;color:#141414;letter-spacing:-0.300px;font-weight:bold;transform:scaleX(0.8744);transform-origin:0 0;;text-shadow:0 0 2px rgba(255,255,255,.9)">TU</div>
<div class="t" style="left:1474.60px;top:722.47px;font-size:13.33px;color:#555d66;letter-spacing:-0.329px;;text-shadow:0 0 2px rgba(255,255,255,.9)">Athen</div>
<div class="t" style="left:1314.20px;top:718.17px;font-size:13.33px;color:#555d66;letter-spacing:-0.300px;transform:scaleX(0.9157);transform-origin:0 0;;text-shadow:0 0 2px rgba(255,255,255,.9)">Tunis</div>
<div class="t" style="left:1362.40px;top:732.47px;font-size:13.33px;color:#555d66;letter-spacing:-0.300px;transform:scaleX(0.8938);transform-origin:0 0;;text-shadow:0 0 2px rgba(255,255,255,.9)">Valletta</div>
<div class="t" style="left:1298.60px;top:752.16px;font-size:12.17px;color:#141414;letter-spacing:-0.398px;font-weight:bold;;text-shadow:0 0 2px rgba(255,255,255,.9)">TUNESIEN</div>
<div class="t" style="left:1584.10px;top:741.87px;font-size:13.33px;color:#555d66;letter-spacing:-0.398px;;text-shadow:0 0 2px rgba(255,255,255,.9)">Nikosia</div>
<div class="t" style="left:1608.40px;top:768.06px;font-size:12.17px;color:#141414;letter-spacing:-0.327px;font-weight:bold;;text-shadow:0 0 2px rgba(255,255,255,.9)">LIB.</div>
<div class="t" style="left:1339.90px;top:797.85px;font-size:15.94px;color:#555d66;letter-spacing:-0.172px;;text-shadow:0 0 2px rgba(255,255,255,.9)">Tripolis</div>
<div class="t" style="left:1339.90px;top:814.41px;font-size:12.46px;color:#555d66;letter-spacing:-0.084px;;text-shadow:0 0 2px rgba(255,255,255,.9)">Tarabulus</div>
<div class="t" style="left:1606.50px;top:803.46px;font-size:12.17px;color:#141414;letter-spacing:-0.300px;font-weight:bold;transform:scaleX(0.9547);transform-origin:0 0;;text-shadow:0 0 2px rgba(255,255,255,.9)">JOR</div>
<div class="t" style="left:1604.00px;top:815.66px;font-size:12.17px;color:#141414;letter-spacing:2.245px;font-weight:bold;;text-shadow:0 0 2px rgba(255,255,255,.9)">ISRA</div>
<div class="t" style="left:950.90px;top:804.67px;font-size:9.57px;color:#7a7a7a;letter-spacing:-0.300px;transform:scaleX(0.9297);transform-origin:0 0">Microsoft Bing</div>
<div class="t" style="left:1285.40px;top:807.87px;font-size:9.57px;color:#222;letter-spacing:-0.093px;;text-shadow:0 0 2px rgba(255,255,255,.9)">© 2025 TomTom, © 2025 Microsoft Corporation,</div>
<div class="t" style="left:1487.50px;top:807.87px;font-size:9.57px;color:#3465b5;letter-spacing:-0.135px;;text-shadow:0 0 2px rgba(255,255,255,.9);text-decoration:underline">© OpenStreetMap</div>
<div class="t" style="left:1572.50px;top:807.87px;font-size:9.57px;color:#3465b5;letter-spacing:-0.300px;transform:scaleX(0.9462);transform-origin:0 0;;text-shadow:0 0 2px rgba(255,255,255,.9);text-decoration:underline">Terms</div></div>
</div>
<svg class="a" style="left:0;top:0" width="1919" height="931"><circle cx="40" cy="26.2" r="1.55" fill="#fff"/>
<circle cx="40" cy="33.5" r="1.55" fill="#fff"/>
<circle cx="40" cy="41" r="1.55" fill="#fff"/>
<circle cx="47.4" cy="26.2" r="1.55" fill="#fff"/>
<circle cx="47.4" cy="33.5" r="1.55" fill="#fff"/>
<circle cx="47.4" cy="41" r="1.55" fill="#fff"/>
<circle cx="55" cy="26.2" r="1.55" fill="#fff"/>
<circle cx="55" cy="33.5" r="1.55" fill="#fff"/>
<circle cx="55" cy="41" r="1.55" fill="#fff"/>
<polyline points="539.5,31.8 545,37.2 550.5,31.8" fill="none" stroke="#fff" stroke-width="1.5"/>
<circle cx="690" cy="31.6" r="6.4" fill="none" stroke="#505050" stroke-width="1.3"/><line x1="694.7" y1="36.3" x2="700.6" y2="42" stroke="#505050" stroke-width="1.4"/>
<path d="M1578.2,38.6 L1579.2,36.8 V31 A6.6,6.6 0 0 1 1592.4,31 V36.8 L1593.4,38.6 Z" fill="none" stroke="#fff" stroke-width="1.3" stroke-linejoin="round"/>
<path d="M1582.8,39.2 A2.6,2.6 0 0 0 1588,39.2" fill="none" stroke="#fff" stroke-width="1.3"/>
<circle cx="1595" cy="22.8" r="10.6" fill="#147a5f" stroke="#fff" stroke-width="1.2"/>
<path d="M1592.6,19.3 H1599 L1594.6,28" fill="none" stroke="#fff" stroke-width="1.5"/>
<path d="M1643.34,23.33 L1647.66,23.33 L1648.00,26.64 L1650.19,27.91 L1653.23,26.54 L1655.39,30.29 L1652.69,32.23 L1652.69,34.77 L1655.39,36.71 L1653.23,40.46 L1650.19,39.09 L1648.00,40.36 L1647.66,43.67 L1643.34,43.67 L1643.00,40.36 L1640.81,39.09 L1637.77,40.46 L1635.61,36.71 L1638.31,34.77 L1638.31,32.23 L1635.61,30.29 L1637.77,26.54 L1640.81,27.91 L1643.00,26.64 Z" fill="none" stroke="#fff" stroke-width="1.3" stroke-linejoin="round"/><circle cx="1645.5" cy="33.5" r="2.8" fill="none" stroke="#fff" stroke-width="1.3"/>
<path d="M1705.4,23.3 V40 M1699.2,34 L1705.4,40.2 L1711.7,34" fill="none" stroke="#fff" stroke-width="1.3"/><line x1="1698" y1="42.8" x2="1713" y2="42.8" stroke="#fff" stroke-width="1.7"/>
<path d="M1760.6,29.5 A4.9,4.9 0 1 1 1768.4,33.2 C1766.3,34.8 1765.2,35.5 1765.2,38.2" fill="none" stroke="#fff" stroke-width="1.3"/><circle cx="1765.3" cy="41.6" r="0.9" fill="#fff"/>
<circle cx="1821.6" cy="31.3" r="2.9" fill="none" stroke="#fff" stroke-width="1.2"/>
<path d="M1816.3,37.2 H1827 A5.35,5.4 0 0 1 1816.3,37.2 Z" fill="none" stroke="#fff" stroke-width="1.2" stroke-linejoin="round"/>
<path d="M1827.6,23.6 H1834 A1.4,1.4 0 0 1 1835.4,25 V29 A1.4,1.4 0 0 1 1834,30.4 H1830.5 L1828.3,32.6 V30.4 A1.6,1.6 0 0 1 1826.2,28.8 V25 A1.4,1.4 0 0 1 1827.6,23.6 Z" fill="none" stroke="#fff" stroke-width="1.2" stroke-linejoin="round"/>
<defs><linearGradient id="avg" x1="0" y1="0" x2="0" y2="1"><stop offset="0" stop-color="#cfd0d4"/><stop offset="1" stop-color="#f2f2f4"/></linearGradient><clipPath id="avc"><circle cx="1885.9" cy="33.8" r="23"/></clipPath></defs>
<circle cx="1885.9" cy="33.8" r="23" fill="url(#avg)"/>
<g clip-path="url(#avc)"><path d="M1885.5,16 C1892,16 1895.5,20.5 1895.3,26.5 C1895.2,31 1894,35 1891.5,38.5 C1891,40.5 1891.5,42 1893,43 L1903,48 C1906,50 1908,54 1908,60 L1863,60 C1863,54 1865,50 1868,48 L1878,43 C1879.5,42 1880,40.5 1879.5,38.5 C1877,35 1875.8,31 1875.8,27 L1874.5,22.5 L1877,23 C1878.5,18.5 1881.5,16 1885.5,16 Z" fill="#8c8c8c"/></g>
<path d="M334.6,78.6 H344 L350,84.6 V97.6 H334.6 Z M344,78.6 V84.6 H350" fill="none" stroke="#3b3a39" stroke-width="1.4" stroke-linejoin="miter"/>
<polyline points="415.2,85.4 420.1,90.4 425,85.4" fill="none" stroke="#3b3a39" stroke-width="1.1"/>
<polyline points="578.6,85.2 583.3,89.9 588,85.2" fill="none" stroke="#3b3a39" stroke-width="1.1"/>
<line x1="448.4" y1="84" x2="448.4" y2="93" stroke="#3b3a39" stroke-width="1.6"/><path d="M449,88.5 H467.3 M463.2,84.2 L467.5,88.5 L463.2,92.8" fill="none" stroke="#1c72c2" stroke-width="1.4"/>
<path d="M611.4,84 V95.3 H625.4 V92.6" fill="none" stroke="#3b3a39" stroke-width="1.6"/>
<path d="M614.5,91.5 C615.5,86 618.5,84 623.5,84 V79.2 L629.8,85.2 L623.5,91 V87.3 C619.5,87.3 616.5,88.5 614.5,91.5 Z" fill="#5aa0e0" stroke="#1b6cc0" stroke-width="1.1" stroke-linejoin="round"/>
<g fill="none" stroke="#3b3a39" stroke-width="1.3"><circle cx="749.4" cy="93.4" r="3"/><circle cx="758.4" cy="93.4" r="3"/><path d="M746.4,92.8 L748.2,84.3 A2.2,2.2 0 0 1 752.4,84.3 V93"/><path d="M761.4,92.8 L759.6,84.3 A2.2,2.2 0 0 0 755.4,84.3 V93"/></g><rect x="752.4" y="87.2" width="3" height="2.4" fill="#3b3a39"/>
<path d="M901,94.6 H897.3 A2.6,2.6 0 0 1 894.7,92 V81 A2.6,2.6 0 0 1 897.3,78.4 H908.3 A2.6,2.6 0 0 1 910.9,81 V84.8" fill="none" stroke="#3b3a39" stroke-width="1.3"/><line x1="898.3" y1="82.6" x2="907" y2="82.6" stroke="#3b3a39" stroke-width="1.3"/><line x1="898.3" y1="86.7" x2="902.5" y2="86.7" stroke="#3b3a39" stroke-width="1.3"/><circle cx="908" cy="92" r="5.9" fill="#3b3a39"/><path d="M908,89 V95 M905,92 H911" stroke="#f5f5f5" stroke-width="1.4"/>
<g transform="translate(1050,88.5) rotate(-45)"><rect x="-7" y="-2.8" width="13" height="5.6" fill="#f6dc8b" stroke="#2b2b2b" stroke-width="1.2"/><path d="M6,-2.8 H8.5 A2.8,2.8 0 0 1 8.5,2.8 H6 Z" fill="#e08ce6" stroke="#2b2b2b" stroke-width="1.2"/><path d="M-7,-2.8 L-13,0 L-7,2.8 Z" fill="#fff" stroke="#2b2b2b" stroke-width="1.2" stroke-linejoin="round"/></g>
<circle cx="1176.8" cy="88.2" r="1.35" fill="#3b3a39"/>
<circle cx="1184.6" cy="88.2" r="1.35" fill="#3b3a39"/>
<circle cx="1192.4" cy="88.2" r="1.35" fill="#3b3a39"/>
<circle cx="1629" cy="88" r="15" fill="#1e8f76"/><path d="M1622,83.3 H1629.5 A5.1,5.1 0 1 1 1624.4,88.6" fill="none" stroke="#fff" stroke-width="1.3"/><polyline points="1625.4,80.2 1622,83.3 1625.4,86.4" fill="none" stroke="#fff" stroke-width="1.3"/>
<path d="M1667.8,78.6 H1680.8 V97.2 L1674.3,92.4 L1667.8,97.2 Z" fill="none" stroke="#3b3a39" stroke-width="1.4" stroke-linejoin="round"/>
<polyline points="1696.5,85 1701.25,90.6 1706,85" fill="none" stroke="#3b3a39" stroke-width="1.1"/>
<rect x="1729.3" y="81" width="19.2" height="14.4" rx="1.8" fill="none" stroke="#3b3a39" stroke-width="1.4"/>
<polyline points="1761.6,85 1766.4,90.6 1771.2,85" fill="none" stroke="#3b3a39" stroke-width="1.1"/>
<path d="M1815.6,84.5 A6.8,6.8 0 1 0 1816.8,88.5" fill="none" stroke="#3b3a39" stroke-width="1.3"/><polyline points="1816.4,80.2 1816.4,84.8 1812,84.8" fill="none" stroke="#3b3a39" stroke-width="1.3"/>
<path d="M1841.8,80.7 H1858.6 V93 H1848 L1843,97.2 V93 H1841.8 Z" fill="none" stroke="#3b3a39" stroke-width="1.4" stroke-linejoin="round"/>
<path d="M1889.80,80.40 L1892.09,85.64 L1897.79,86.20 L1893.51,90.01 L1894.74,95.60 L1889.80,92.70 L1884.86,95.60 L1886.09,90.01 L1881.81,86.20 L1887.51,85.64 Z" fill="none" stroke="#3b3a39" stroke-width="1.3" stroke-linejoin="round"/>
<path d="M37.5,88.5 L48,77 L58.5,88.5 V98.4 H52.8 V92.5 A4.8,4.8 0 0 0 43.2,92.5 V98.4 H37.5 Z" fill="none" stroke="#3f3f3f" stroke-width="1.5" stroke-linejoin="round"/>
<circle cx="48.1" cy="157.6" r="11.9" fill="none" stroke="#3f3f3f" stroke-width="1.4"/><path d="M48.1,151.5 V163.7 M42,157.6 H54.2" stroke="#3f3f3f" stroke-width="1.5"/>
<path d="M36.5,222.5 V219.5 A2.5,2.5 0 0 1 39,217 H43.5 L46.5,220 H58 A2.2,2.2 0 0 1 60.2,222.2 V235.5 A2.5,2.5 0 0 1 57.7,238 H39 A2.5,2.5 0 0 1 36.5,235.5 Z M36.5,222.5 H44 L46.5,220" fill="none" stroke="#3f3f3f" stroke-width="1.5" stroke-linejoin="round"/>
<g fill="none" stroke="#3f3f3f" stroke-width="1.4"><circle cx="48.6" cy="317.2" r="11"/><path d="M43.8,309.8 C44,315 46.5,318.5 50,321 C53,317.5 56,317.5 58.8,318.8"/><path d="M39.5,322 C42,324.5 46,324.3 50,321"/></g><path d="M41.6,309 C37.2,312 36,319 40.2,323.8 C39,319.5 40,313.5 44.5,310.5 Z" fill="#3f3f3f"/><path d="M42.5,308.5 L46.5,304.5 C49.5,302.5 53,303.5 54,307.5 C50.5,306.2 46,306.8 42.5,308.5 Z" fill="#3f3f3f"/>
<g fill="none" stroke="#3f3f3f" stroke-width="1.5" stroke-linejoin="round"><path d="M37.5,375.5 H46.8 V385 H37.5 Z M37.5,385 H46.8 V394.8 H39.3 A1.8,1.8 0 0 1 37.5,393 Z M46.8,385 H57 A1.8,1.8 0 0 1 58.8,386.8 V393 A1.8,1.8 0 0 1 57,394.8 H46.8 Z"/><path d="M47,381.5 L52.6,375.5 L58.6,381.5 L52.6,387.5 Z" transform="rotate(0)"/></g>
<g fill="none" stroke="#3f3f3f" stroke-width="1.5" stroke-linejoin="round"><path d="M41.5,444.5 H54.5 V453 A6.5,6.5 0 0 1 41.5,453 Z"/><path d="M41.5,446.5 H38.5 V450.5 A3,3 0 0 0 41.5,453.5 M54.5,446.5 H57.5 V450.5 A3,3 0 0 1 54.5,453.5"/><path d="M48,459.5 V463.5 M42.3,467.3 A2.5,2.5 0 0 1 44.8,463.5 H51.2 A2.5,2.5 0 0 1 53.7,467.3 Z"/></g>
<g fill="none" stroke="#3f3f3f" stroke-width="1.5" stroke-linejoin="round"><rect x="36.3" y="519.8" width="17.8" height="12.7" rx="1.8"/><path d="M56.8,523.5 V533 A2.5,2.5 0 0 1 54.3,535.5 H39.5"/><path d="M59.6,526.5 V534.5 A3.8,3.8 0 0 1 55.8,538.3 H42.5"/></g>
<g fill="none" stroke="#217a67" stroke-width="1.5"><circle cx="42.8" cy="607.6" r="2.7"/><circle cx="53.5" cy="607.6" r="2.7"/><circle cx="48.1" cy="614.3" r="2.7"/><path d="M38.8,612.8 H41 M55.3,612.8 H57.5"/><path d="M38.8,612.8 A4.2,4.2 0 0 0 41.5,620 M57.5,612.8 A4.2,4.2 0 0 1 54.7,620"/><path d="M42.5,619.8 H53.8 A5.65,5.5 0 0 1 42.5,619.8 Z"/></g>
<rect x="36.1" y="696" width="23.8" height="23.6" rx="3" fill="#f7f7f7" stroke="#8a8a8a" stroke-width="1.1"/><path d="M43.8,700.5 V713.5 M48,704.5 V713.5 M52.2,707.5 V713.5" stroke="#c78912" stroke-width="1.7"/>
<circle cx="41" cy="804.8" r="2" fill="#3f3f3f"/>
<circle cx="48" cy="804.8" r="2" fill="#3f3f3f"/>
<circle cx="55" cy="804.8" r="2" fill="#3f3f3f"/>
<defs><linearGradient id="pb3" x1="0" y1="0" x2="0" y2="1"><stop offset="0" stop-color="#e2a60f"/><stop offset="1" stop-color="#c98214"/></linearGradient><linearGradient id="pb2" x1="0" y1="0" x2="0" y2="1"><stop offset="0" stop-color="#f2cd44"/><stop offset="1" stop-color="#e6b424"/></linearGradient></defs>
<rect x="49.6" y="861" width="9.4" height="29.8" rx="0.8" fill="url(#pb3)"/><rect x="43" y="868.6" width="9.8" height="22.2" rx="0.8" fill="url(#pb2)"/><rect x="37" y="876" width="9.7" height="14.8" rx="0.8" fill="#f3da6a"/>
<path d="M290.6,82.8 L285.4,88.3 L290.6,93.8 M296.4,82.8 L291.2,88.3 L296.4,93.8" fill="none" stroke="#424242" stroke-width="1.1"/>
<g fill="none" stroke="#3b3a39" stroke-width="1.2" stroke-linejoin="round"><path d="M1474.6,251.2 L1481.8,258.4 L1478.8,259.4 L1475.6,262.6 L1475.4,266 L1467.8,258.4 L1471.2,258.2 L1474.4,255 Z"/><line x1="1471.4" y1="262.2" x2="1467" y2="266.6"/></g>
<g fill="none" stroke="#c4c4c4" stroke-width="1.2"><rect x="1505.5" y="250.5" width="10" height="12.6" rx="1.5"/><path d="M1503.2,253.5 V263.5 A2,2 0 0 0 1505.2,265.5 H1512"/></g>
<g stroke="#3b3a39" stroke-width="1.2"><line x1="1536.2" y1="252" x2="1551" y2="252"/><line x1="1538.8" y1="257.6" x2="1548.4" y2="257.6"/><line x1="1541.6" y1="263" x2="1545.6" y2="263"/></g>
<g fill="none" stroke="#3b3a39" stroke-width="1.3"><path d="M1577,251 H1571 V265.5 H1585.5 V259.5"/><path d="M1578.5,258.5 L1585.2,251.8 M1580.2,251 H1585.7 V256.5"/></g>
<circle cx="1606.7" cy="258.2" r="1.5" fill="#6b6b6b"/>
<circle cx="1612.4" cy="258.2" r="1.5" fill="#6b6b6b"/>
<circle cx="1618.1" cy="258.2" r="1.5" fill="#6b6b6b"/>
<g stroke="#1c2b45" stroke-width="1.4"><line x1="1681.8" y1="131" x2="1698" y2="131"/><line x1="1684.5" y1="136.3" x2="1695.3" y2="136.3"/><line x1="1687.2" y1="141.3" x2="1692.5" y2="141.3"/></g>
<path d="M1890.8,132.6 L1894.8,136.8 L1890.8,141 M1895,132.6 L1899,136.8 L1895,141" fill="none" stroke="#1c2b45" stroke-width="1.3"/>
<circle cx="1696.2" cy="189" r="5" fill="none" stroke="#1c2b45" stroke-width="1.3"/><line x1="1699.8" y1="192.6" x2="1704.8" y2="197.6" stroke="#1c2b45" stroke-width="1.4"/>
<circle cx="1888.5" cy="252.4" r="0.9" fill="#1c2b45"/>
<circle cx="1892.6" cy="252.4" r="0.9" fill="#1c2b45"/>
<circle cx="1896.7" cy="252.4" r="0.9" fill="#1c2b45"/>
<polyline points="1856,288 1860.65,293.6 1865.3,288" fill="none" stroke="#1c2b45" stroke-width="1.2"/>
<g transform="translate(1885,291) rotate(-45)" fill="none" stroke="#b0b0b0" stroke-width="1.1" stroke-linejoin="round"><path d="M-5.5,-3 H4 A2.5,2.5 0 0 1 6.5,-0.5 V0.5 A2.5,2.5 0 0 1 4,3 H-5.5 Z M-1,-3 V3"/></g>
<polyline points="1838.5,358.5 1843.6,364 1848.7,358.5" fill="none" stroke="#1c2b45" stroke-width="1.2"/>
<g transform="translate(1880,361) rotate(-45)" fill="none" stroke="#2a2a2a" stroke-width="1.1" stroke-linejoin="round"><path d="M-5.5,-3 H4 A2.5,2.5 0 0 1 6.5,-0.5 V0.5 A2.5,2.5 0 0 1 4,3 H-5.5 Z M-1,-3 V3"/></g>
<polyline points="1838.5,427.5 1843.6,433 1848.7,427.5" fill="none" stroke="#1c2b45" stroke-width="1.2"/>
<g transform="translate(1880,430) rotate(-45)" fill="none" stroke="#b0b0b0" stroke-width="1.1" stroke-linejoin="round"><path d="M-5.5,-3 H4 A2.5,2.5 0 0 1 6.5,-0.5 V0.5 A2.5,2.5 0 0 1 4,3 H-5.5 Z M-1,-3 V3"/></g>
<line x1="1650.5" y1="911" x2="1655.7" y2="911" stroke="#595959" stroke-width="1.6"/>
<line x1="1662" y1="911.2" x2="1787" y2="911.2" stroke="#595959" stroke-width="1"/>
<rect x="1711" y="905" width="5" height="12.8" fill="#595959"/><line x1="1724.4" y1="908.2" x2="1724.4" y2="914.8" stroke="#595959" stroke-width="1"/>
<path d="M1798.7,906 V916.4 M1793.8,911.2 H1803.6" stroke="#595959" stroke-width="1.7"/>
<rect x="1874.5" y="906.5" width="16" height="10.8" rx="1.5" fill="none" stroke="#595959" stroke-width="1.2"/><path d="M1877.5,911 V909 H1879.5 M1885.5,909 H1887.5 V911 M1887.5,913 V915 H1885.5 M1879.5,915 H1877.5 V913" fill="none" stroke="#595959" stroke-width="1"/></svg>
<div class="a" id="tooltip"></div>
<svg class="a" style="left:0;top:0" width="1919" height="931"><path d="M1227 528 L1235 536.5 L1227 545 Z" fill="#fff"/></svg>
<div class="t" style="left:100.09px;top:24.99px;font-size:18.84px;color:#fff;letter-spacing:-0.300px;transform:scaleX(0.9149);transform-origin:0 0">RoI ICT-APP-Report v1.0</div>
<div class="t" style="left:318.26px;top:24.99px;font-size:18.84px;color:#fff;letter-spacing:-0.300px;transform:scaleX(0.9375);transform-origin:0 0">Datenaktualisierung: 2.6.25</div>
<div class="t" style="left:710.50px;top:26.03px;font-size:18.55px;color:#616161;letter-spacing:-0.300px;transform:scaleX(0.8961);transform-origin:0 0">Suchen</div>
<div class="t" style="left:362.35px;top:80.19px;font-size:18.84px;color:#252423;letter-spacing:-0.300px;transform:scaleX(0.9539);transform-origin:0 0">Datei</div>
<div class="t" style="left:477.25px;top:80.19px;font-size:18.84px;color:#252423;letter-spacing:-0.300px;transform:scaleX(0.9487);transform-origin:0 0">Exportieren</div>
<div class="t" style="left:640.77px;top:80.19px;font-size:18.84px;color:#252423;letter-spacing:-0.300px;transform:scaleX(0.9282);transform-origin:0 0">Freigeben</div>
<div class="t" style="left:773.87px;top:80.19px;font-size:18.84px;color:#252423;letter-spacing:-0.300px;transform:scaleX(0.9271);transform-origin:0 0">Durchsuchen</div>
<div class="t" style="left:924.60px;top:80.19px;font-size:18.84px;color:#252423;letter-spacing:-0.300px;transform:scaleX(0.9566);transform-origin:0 0">Abonnieren</div>
<div class="t" style="left:1069.86px;top:80.19px;font-size:18.84px;color:#252423;letter-spacing:-0.300px;transform:scaleX(0.9379);transform-origin:0 0">Bearbeiten</div>
<div class="t" style="left:34.80px;top:109.21px;font-size:12.46px;color:#424242;letter-spacing:-0.260px">Start</div>
<div class="t" style="left:24.00px;top:179.31px;font-size:12.46px;color:#424242;letter-spacing:-0.316px">Erstellen</div>
<div class="t" style="left:15.00px;top:249.41px;font-size:12.46px;color:#424242;letter-spacing:-0.180px">Durchsuche</div>
<div class="t" style="left:43.80px;top:266.41px;font-size:12.46px;color:#424242">n</div>
<div class="t" style="left:23.70px;top:335.81px;font-size:12.46px;color:#424242;letter-spacing:-0.300px;transform:scaleX(0.9771);transform-origin:0 0">OneLake</div>
<div class="t" style="left:33.50px;top:404.61px;font-size:12.46px;color:#424242;letter-spacing:0.081px">Apps</div>
<div class="t" style="left:22.20px;top:476.31px;font-size:12.46px;color:#424242;letter-spacing:0.311px">Metriken</div>
<div class="t" style="left:14.70px;top:550.71px;font-size:12.46px;color:#424242;letter-spacing:0.029px">Arbeitsberei</div>
<div class="t" style="left:37.90px;top:566.91px;font-size:12.46px;color:#424242;letter-spacing:-0.426px">che</div>
<div class="t" style="left:17.60px;top:637.01px;font-size:12.46px;color:#424242;letter-spacing:-0.086px">DE - M365</div>
<div class="t" style="left:14.50px;top:655.01px;font-size:12.46px;color:#424242;letter-spacing:0.017px">Frontrunn...</div>
<div class="t" style="left:24.80px;top:728.41px;font-size:12.46px;color:#242424;letter-spacing:-0.213px;font-weight:bold">RoI ICT-</div>
<div class="t" style="left:14.40px;top:746.21px;font-size:12.46px;color:#242424;letter-spacing:-0.381px;font-weight:bold">APP-Repo...</div>
<div class="t" style="left:23.00px;top:897.61px;font-size:12.46px;color:#424242;letter-spacing:-0.266px">Power BI</div>
<div class="t" style="left:110.60px;top:83.91px;font-size:19.28px;color:#242424;letter-spacing:-0.410px;font-weight:bold">Seiten</div>
<div class="t" style="left:105.60px;top:148.43px;font-size:18.55px;color:#242424;letter-spacing:-0.300px;transform:scaleX(0.9230);transform-origin:0 0">CA Overview</div>
<div class="t" style="left:104.68px;top:198.33px;font-size:18.55px;color:#242424;letter-spacing:-0.300px;font-weight:bold;transform:scaleX(0.9221);transform-origin:0 0">ICT Service Provider De...</div>
<div class="t" style="left:104.64px;top:248.23px;font-size:18.55px;color:#242424;letter-spacing:-0.300px;transform:scaleX(0.9630);transform-origin:0 0">Function Details</div>
<div class="t" style="left:105.60px;top:298.23px;font-size:18.55px;color:#242424;letter-spacing:-0.300px;transform:scaleX(0.9521);transform-origin:0 0">Supply chain</div>
<div class="t" style="left:104.62px;top:348.23px;font-size:18.55px;color:#242424;letter-spacing:-0.300px;transform:scaleX(0.9814);transform-origin:0 0">Data validation</div>
<div class="t" style="left:338.40px;top:151.00px;font-size:16.23px;color:#1c2b45;letter-spacing:0.203px;font-weight:bold">DORA - Register of Information (RoI) - ICT | Service Provider Details</div>
<div class="t" style="left:337.50px;top:205.84px;font-size:14.78px;color:#111;letter-spacing:0.065px;font-weight:bold">ICT Service Provider Details</div>
<div class="t" style="left:342.80px;top:236.86px;font-size:16.52px;color:#1c2b45;font-weight:bold">7</div>
<div class="t" style="left:507.70px;top:236.86px;font-size:16.52px;color:#1c2b45;letter-spacing:0.239px;font-weight:bold">1.019.413</div>
<div class="t" style="left:341.50px;top:259.18px;font-size:14.49px;color:#8a8a8a;letter-spacing:0.506px">Number of Contracts</div>
<div class="t" style="left:508.70px;top:259.18px;font-size:14.49px;color:#8a8a8a;letter-spacing:0.204px">Value of Contracts</div>
<div class="t" style="left:353.00px;top:286.84px;font-size:15.36px;color:#0d3fa0;letter-spacing:-0.015px">Number and Value of Contracts per ICT Service Provider</div>
<div class="t" style="left:360.50px;top:320.26px;font-size:12.75px;color:#1c2b45;letter-spacing:-0.300px;font-weight:bold;transform:scaleX(0.9641);transform-origin:0 0">ICT Service provider</div>
<div class="t" style="left:629.20px;top:320.26px;font-size:12.75px;color:#1c2b45;letter-spacing:-0.300px;font-weight:bold;transform:scaleX(0.9752);transform-origin:0 0">Number of Contracts</div>
<div class="t" style="left:759.50px;top:320.26px;font-size:12.75px;color:#1c2b45;letter-spacing:-0.300px;font-weight:bold;transform:scaleX(0.9695);transform-origin:0 0">Value of Contracts</div>
<div class="t" style="left:359.50px;top:351.04px;font-size:12.9px;color:#1c2b45;letter-spacing:-0.270px">Brown, Lopez and Hubbard GmbH</div>
<div class="t" style="left:359.55px;top:371.84px;font-size:12.9px;color:#1c2b45;letter-spacing:-0.300px;transform:scaleX(0.9524);transform-origin:0 0">Padilla PLC GmbH</div>
<div class="t" style="left:360.50px;top:392.64px;font-size:12.9px;color:#1c2b45;letter-spacing:-0.300px;transform:scaleX(0.9748);transform-origin:0 0">Taylor, Galvan and Cox GmbH</div>
<div class="t" style="left:360.50px;top:415.74px;font-size:12.9px;color:#1c2b45;letter-spacing:-0.300px;font-weight:bold;transform:scaleX(0.9098);transform-origin:0 0">Gesamt</div>
<div class="t" style="left:741.00px;top:351.04px;font-size:12.9px;color:#1c2b45">1</div>
<div class="t" style="left:741.00px;top:371.84px;font-size:12.9px;color:#1c2b45">1</div>
<div class="t" style="left:741.00px;top:392.64px;font-size:12.9px;color:#1c2b45">5</div>
<div class="t" style="left:741.00px;top:415.74px;font-size:12.9px;color:#1c2b45;font-weight:bold">7</div>
<div class="t" style="left:828.40px;top:351.04px;font-size:12.9px;color:#1c2b45;letter-spacing:-0.300px;transform:scaleX(0.9296);transform-origin:0 0">18.054</div>
<div class="t" style="left:821.00px;top:371.84px;font-size:12.9px;color:#1c2b45;letter-spacing:-0.300px;transform:scaleX(0.9523);transform-origin:0 0">231.516</div>
<div class="t" style="left:821.00px;top:392.64px;font-size:12.9px;color:#1c2b45;letter-spacing:-0.300px;transform:scaleX(0.9523);transform-origin:0 0">769.843</div>
<div class="t" style="left:814.40px;top:415.74px;font-size:12.9px;color:#1c2b45;letter-spacing:-0.300px;font-weight:bold;transform:scaleX(0.8963);transform-origin:0 0">1.019.413</div>
<div class="t" style="left:932.40px;top:282.27px;font-size:15.8px;color:#0d3fa0;letter-spacing:-0.070px">Number and Value of Contracts per Country of the service provider headquarter</div>
<div class="t" style="left:1709.94px;top:129.32px;font-size:19.86px;color:#1c2b45;letter-spacing:-0.300px;font-weight:bold;transform:scaleX(0.9628);transform-origin:0 0">Filter</div>
<div class="t" style="left:1720.30px;top:185.08px;font-size:16.38px;color:#1c2b45;letter-spacing:-0.300px;transform:scaleX(0.9724);transform-origin:0 0">Suchen</div>
<div class="t" style="left:1674.30px;top:241.81px;font-size:14.93px;color:#1c2b45;letter-spacing:-0.135px">Filter für dieses Visual</div>
<div class="t" style="left:1686.00px;top:284.80px;font-size:15.65px;color:#1c2b45;letter-spacing:-0.307px">Country of the service ...</div>
<div class="t" style="left:1685.00px;top:307.60px;font-size:15.65px;color:#1c2b45;letter-spacing:-0.338px">ist (alle)</div>
<div class="t" style="left:1685.00px;top:354.60px;font-size:15.65px;color:#111;letter-spacing:-0.051px;font-weight:bold">Number of Contr...</div>
<div class="t" style="left:1685.00px;top:378.20px;font-size:15.65px;color:#1c2b45;letter-spacing:-0.282px">ist größer als &quot;0&quot;</div>
<div class="t" style="left:1686.00px;top:423.80px;font-size:15.65px;color:#1c2b45;letter-spacing:-0.300px;transform:scaleX(0.9765);transform-origin:0 0">Value of Contracts</div>
<div class="t" style="left:1685.00px;top:447.20px;font-size:15.65px;color:#1c2b45;letter-spacing:-0.338px">ist (alle)</div>
<div class="t" style="left:1820.30px;top:903.99px;font-size:15.07px;color:#605e5c;letter-spacing:-0.300px;transform:scaleX(0.9686);transform-origin:0 0">84 %</div>
<div class="t" style="left:839.90px;top:472.30px;font-size:16.23px;color:#1c2b45;letter-spacing:-0.300px;transform:scaleX(0.9630);transform-origin:0 0">Country of the service provider headquarter</div>
<div class="t" style="left:980.08px;top:494.20px;font-size:16.23px;color:#1c2b45">Number of Contracts</div>
<div class="t" style="left:997.49px;top:516.80px;font-size:16.23px;color:#1c2b45">Value of Contracts</div>
<div class="t" style="left:1145.18px;top:472.30px;font-size:16.23px;color:#1c2b45;letter-spacing:-0.300px;transform:scaleX(0.8172);transform-origin:0 0">FRANCE</div>
<div class="t" style="left:1146.00px;top:494.20px;font-size:16.23px;color:#1c2b45">7</div>
<div class="t" style="left:1145.11px;top:516.80px;font-size:16.23px;color:#1c2b45;letter-spacing:-0.300px;transform:scaleX(0.8919);transform-origin:0 0">1.019.413</div>
<svg class="a" style="left:0;top:0" width="1919" height="931"><path d="M1245 522 L1245 544 L1250.5 539 L1254.5 548 L1258 546.5 L1254 537.5 L1261 537.5 Z" fill="#fff" stroke="#222" stroke-width="1" stroke-linejoin="round"/></svg>
</body></html>
